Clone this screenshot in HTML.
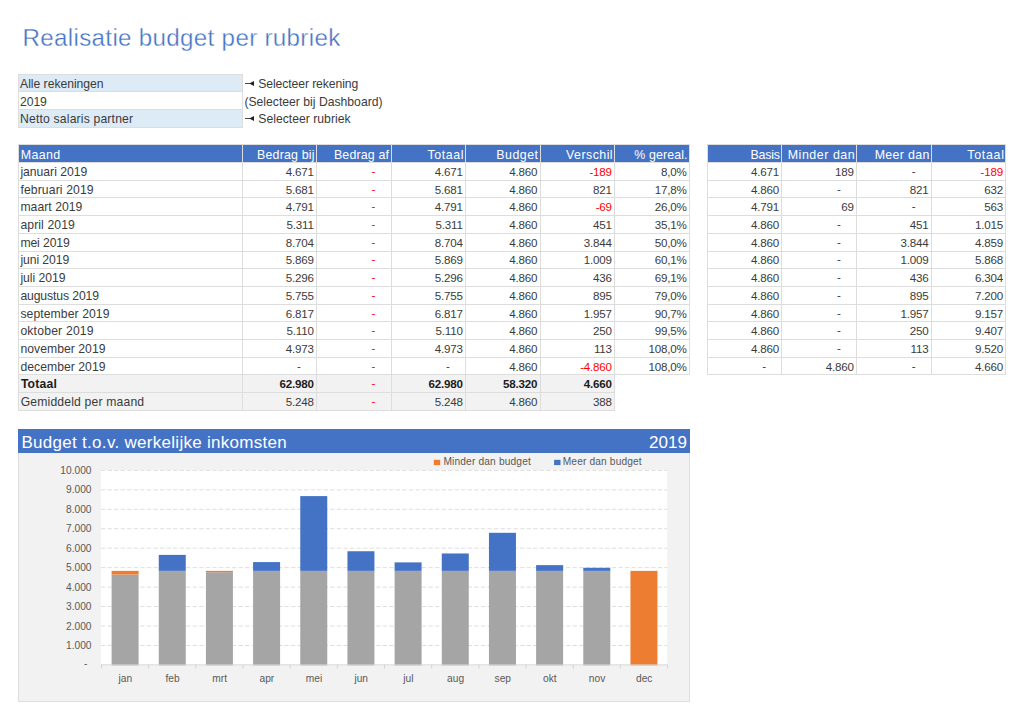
<!DOCTYPE html>
<html><head><meta charset="utf-8"><title>Realisatie budget per rubriek</title>
<style>
html,body{margin:0;padding:0;background:#fff;}
body{width:1024px;height:720px;position:relative;overflow:hidden;font-family:"Liberation Sans",sans-serif;color:#3b3b3b;font-size:12px;}
.a{position:absolute;white-space:nowrap;box-sizing:border-box;}
.c{position:absolute;white-space:pre;}
.ln{position:absolute;background:#DDDDDD;}
</style></head><body>

<div class="c" style="left:22.6px;top:24.3px;font-size:24.2px;letter-spacing:0.3px;color:#4472C4;-webkit-text-stroke:0.35px #fff;">Realisatie budget per rubriek</div>
<div class="a" style="left:18px;top:74.14px;width:224px;height:17.69px;background:#DDEBF7;"></div>
<div class="c" style="top:77px;line-height:14px;font-size:12.2px;letter-spacing:-0.035px;left:20.09px;">Alle rekeningen</div>
<div class="a" style="left:18px;top:91.83px;width:224px;height:17.69px;background:#FFFFFF;"></div>
<div class="c" style="top:95px;line-height:14px;font-size:12.2px;letter-spacing:-0.118px;left:20.09px;">2019</div>
<div class="a" style="left:18px;top:109.52px;width:224px;height:17.69px;background:#DDEBF7;"></div>
<div class="c" style="top:112px;line-height:14px;font-size:12.2px;letter-spacing:0.163px;left:20.09px;">Netto salaris partner</div>
<div class="ln" style="left:18px;top:73.64px;width:224.5px;height:1px;"></div>
<div class="ln" style="left:18px;top:91.33px;width:224.5px;height:1px;"></div>
<div class="ln" style="left:18px;top:109.02px;width:224.5px;height:1px;"></div>
<div class="ln" style="left:18px;top:126.71px;width:224.5px;height:1px;"></div>
<div class="ln" style="left:17.5px;top:73.64px;width:1px;height:53.07px;"></div>
<div class="ln" style="left:241.5px;top:73.64px;width:1px;height:53.07px;"></div>
<svg class="a" style="left:245px;top:80.00px" width="10" height="7" viewBox="0 0 10 7"><path d="M0 3.5H5" stroke="#333" stroke-width="0.9" fill="none"/><path d="M4.2 3.5L9 1V6Z" fill="#222"/></svg>
<div class="c" style="top:77px;line-height:14px;font-size:12.2px;letter-spacing:-0.100px;left:258.29px;">Selecteer rekening</div>
<div class="c" style="top:95px;line-height:14px;font-size:12.2px;left:244.39px;">(Selecteer bij Dashboard)</div>
<svg class="a" style="left:245px;top:115.30px" width="10" height="7" viewBox="0 0 10 7"><path d="M0 3.5H5" stroke="#333" stroke-width="0.9" fill="none"/><path d="M4.2 3.5L9 1V6Z" fill="#222"/></svg>
<div class="c" style="top:112px;line-height:14px;font-size:12.2px;letter-spacing:0.011px;left:258.29px;">Selecteer rubriek</div>
<div class="a" style="left:18px;top:145.30px;width:671.5px;height:17.29px;background:#4472C4;"></div>
<div class="a" style="left:707.2px;top:145.30px;width:298.50px;height:17.29px;background:#4472C4;"></div>
<div class="a" style="left:18px;top:374.87px;width:596.6px;height:35.38px;background:#F2F2F2;"></div>
<div class="c" style="top:148px;line-height:14px;font-size:12.4px;letter-spacing:0.387px;color:#fff;left:20.68px;">Maand</div>
<div class="c" style="top:148px;line-height:14px;font-size:12.4px;letter-spacing:0.183px;color:#fff;right:709.30px;">Bedrag bij</div>
<div class="c" style="top:148px;line-height:14px;font-size:12.4px;letter-spacing:0.176px;color:#fff;right:634.80px;">Bedrag af</div>
<div class="c" style="top:148px;line-height:14px;font-size:12.4px;letter-spacing:0.592px;color:#fff;right:559.89px;">Totaal</div>
<div class="c" style="top:148px;line-height:14px;font-size:12.4px;letter-spacing:0.492px;color:#fff;right:485.49px;">Budget</div>
<div class="c" style="top:148px;line-height:14px;font-size:12.4px;letter-spacing:0.450px;color:#fff;right:410.93px;">Verschil</div>
<div class="c" style="top:148px;line-height:14px;font-size:12.4px;letter-spacing:0.123px;color:#fff;right:336.36px;">% gereal.</div>
<div class="c" style="top:148px;line-height:14px;font-size:12.4px;letter-spacing:-0.218px;color:#fff;right:244.30px;">Basis</div>
<div class="c" style="top:148px;line-height:14px;font-size:12.4px;letter-spacing:0.560px;color:#fff;right:168.72px;">Minder dan</div>
<div class="c" style="top:148px;line-height:14px;font-size:12.4px;letter-spacing:0.340px;color:#fff;right:94.24px;">Meer dan</div>
<div class="c" style="top:148px;line-height:14px;font-size:12.4px;letter-spacing:0.712px;color:#fff;right:19.37px;">Totaal</div>
<div class="c" style="top:165px;line-height:14px;font-size:12.2px;letter-spacing:-0.016px;left:20.39px;">januari 2019</div>
<div class="c" style="top:166px;line-height:12px;font-size:11.6px;right:710.30px;letter-spacing:-0.2px;">4.671</div>
<div class="c" style="top:165px;line-height:12px;font-size:11.6px;right:648.90px;letter-spacing:-0.2px;color:#FF0000;">-</div>
<div class="c" style="top:166px;line-height:12px;font-size:11.6px;right:561.30px;letter-spacing:-0.2px;">4.671</div>
<div class="c" style="top:166px;line-height:12px;font-size:11.6px;right:486.80px;letter-spacing:-0.2px;">4.860</div>
<div class="c" style="top:166px;line-height:12px;font-size:11.6px;right:412.20px;letter-spacing:-0.2px;color:#FF0000;">-189</div>
<div class="c" style="top:166px;line-height:12px;font-size:11.6px;right:337.30px;letter-spacing:-0.2px;">8,0%</div>
<div class="c" style="top:166px;line-height:12px;font-size:11.6px;right:245.10px;letter-spacing:-0.2px;">4.671</div>
<div class="c" style="top:166px;line-height:12px;font-size:11.6px;right:170.30px;letter-spacing:-0.2px;">189</div>
<div class="c" style="top:165px;line-height:12px;font-size:11.6px;right:108.70px;letter-spacing:-0.2px;">-</div>
<div class="c" style="top:166px;line-height:12px;font-size:11.6px;right:21.10px;letter-spacing:-0.2px;color:#FF0000;">-189</div>
<div class="c" style="top:183px;line-height:14px;font-size:12.2px;letter-spacing:0.116px;left:20.39px;">februari 2019</div>
<div class="c" style="top:184px;line-height:12px;font-size:11.6px;right:710.30px;letter-spacing:-0.2px;">5.681</div>
<div class="c" style="top:183px;line-height:12px;font-size:11.6px;right:648.90px;letter-spacing:-0.2px;color:#FF0000;">-</div>
<div class="c" style="top:184px;line-height:12px;font-size:11.6px;right:561.30px;letter-spacing:-0.2px;">5.681</div>
<div class="c" style="top:184px;line-height:12px;font-size:11.6px;right:486.80px;letter-spacing:-0.2px;">4.860</div>
<div class="c" style="top:184px;line-height:12px;font-size:11.6px;right:412.20px;letter-spacing:-0.2px;">821</div>
<div class="c" style="top:184px;line-height:12px;font-size:11.6px;right:337.30px;letter-spacing:-0.2px;">17,8%</div>
<div class="c" style="top:184px;line-height:12px;font-size:11.6px;right:245.10px;letter-spacing:-0.2px;">4.860</div>
<div class="c" style="top:183px;line-height:12px;font-size:11.6px;right:183.40px;letter-spacing:-0.2px;">-</div>
<div class="c" style="top:184px;line-height:12px;font-size:11.6px;right:95.60px;letter-spacing:-0.2px;">821</div>
<div class="c" style="top:184px;line-height:12px;font-size:11.6px;right:21.10px;letter-spacing:-0.2px;">632</div>
<div class="c" style="top:200px;line-height:14px;font-size:12.2px;letter-spacing:0.040px;left:20.39px;">maart 2019</div>
<div class="c" style="top:201px;line-height:12px;font-size:11.6px;right:710.30px;letter-spacing:-0.2px;">4.791</div>
<div class="c" style="top:200px;line-height:12px;font-size:11.6px;right:648.90px;letter-spacing:-0.2px;color:#FF0000;">-</div>
<div class="c" style="top:201px;line-height:12px;font-size:11.6px;right:561.30px;letter-spacing:-0.2px;">4.791</div>
<div class="c" style="top:201px;line-height:12px;font-size:11.6px;right:486.80px;letter-spacing:-0.2px;">4.860</div>
<div class="c" style="top:201px;line-height:12px;font-size:11.6px;right:412.20px;letter-spacing:-0.2px;color:#FF0000;">-69</div>
<div class="c" style="top:201px;line-height:12px;font-size:11.6px;right:337.30px;letter-spacing:-0.2px;">26,0%</div>
<div class="c" style="top:201px;line-height:12px;font-size:11.6px;right:245.10px;letter-spacing:-0.2px;">4.791</div>
<div class="c" style="top:201px;line-height:12px;font-size:11.6px;right:170.30px;letter-spacing:-0.2px;">69</div>
<div class="c" style="top:200px;line-height:12px;font-size:11.6px;right:108.70px;letter-spacing:-0.2px;">-</div>
<div class="c" style="top:201px;line-height:12px;font-size:11.6px;right:21.10px;letter-spacing:-0.2px;">563</div>
<div class="c" style="top:218px;line-height:14px;font-size:12.2px;letter-spacing:0.099px;left:20.39px;">april 2019</div>
<div class="c" style="top:219px;line-height:12px;font-size:11.6px;right:710.30px;letter-spacing:-0.2px;">5.311</div>
<div class="c" style="top:218px;line-height:12px;font-size:11.6px;right:648.90px;letter-spacing:-0.2px;color:#FF0000;">-</div>
<div class="c" style="top:219px;line-height:12px;font-size:11.6px;right:561.30px;letter-spacing:-0.2px;">5.311</div>
<div class="c" style="top:219px;line-height:12px;font-size:11.6px;right:486.80px;letter-spacing:-0.2px;">4.860</div>
<div class="c" style="top:219px;line-height:12px;font-size:11.6px;right:412.20px;letter-spacing:-0.2px;">451</div>
<div class="c" style="top:219px;line-height:12px;font-size:11.6px;right:337.30px;letter-spacing:-0.2px;">35,1%</div>
<div class="c" style="top:219px;line-height:12px;font-size:11.6px;right:245.10px;letter-spacing:-0.2px;">4.860</div>
<div class="c" style="top:218px;line-height:12px;font-size:11.6px;right:183.40px;letter-spacing:-0.2px;">-</div>
<div class="c" style="top:219px;line-height:12px;font-size:11.6px;right:95.60px;letter-spacing:-0.2px;">451</div>
<div class="c" style="top:219px;line-height:12px;font-size:11.6px;right:21.10px;letter-spacing:-0.2px;">1.015</div>
<div class="c" style="top:236px;line-height:14px;font-size:12.2px;letter-spacing:-0.103px;left:20.39px;">mei 2019</div>
<div class="c" style="top:237px;line-height:12px;font-size:11.6px;right:710.30px;letter-spacing:-0.2px;">8.704</div>
<div class="c" style="top:236px;line-height:12px;font-size:11.6px;right:648.90px;letter-spacing:-0.2px;color:#FF0000;">-</div>
<div class="c" style="top:237px;line-height:12px;font-size:11.6px;right:561.30px;letter-spacing:-0.2px;">8.704</div>
<div class="c" style="top:237px;line-height:12px;font-size:11.6px;right:486.80px;letter-spacing:-0.2px;">4.860</div>
<div class="c" style="top:237px;line-height:12px;font-size:11.6px;right:412.20px;letter-spacing:-0.2px;">3.844</div>
<div class="c" style="top:237px;line-height:12px;font-size:11.6px;right:337.30px;letter-spacing:-0.2px;">50,0%</div>
<div class="c" style="top:237px;line-height:12px;font-size:11.6px;right:245.10px;letter-spacing:-0.2px;">4.860</div>
<div class="c" style="top:236px;line-height:12px;font-size:11.6px;right:183.40px;letter-spacing:-0.2px;">-</div>
<div class="c" style="top:237px;line-height:12px;font-size:11.6px;right:95.60px;letter-spacing:-0.2px;">3.844</div>
<div class="c" style="top:237px;line-height:12px;font-size:11.6px;right:21.10px;letter-spacing:-0.2px;">4.859</div>
<div class="c" style="top:253px;line-height:14px;font-size:12.2px;letter-spacing:-0.083px;left:20.39px;">juni 2019</div>
<div class="c" style="top:254px;line-height:12px;font-size:11.6px;right:710.30px;letter-spacing:-0.2px;">5.869</div>
<div class="c" style="top:253px;line-height:12px;font-size:11.6px;right:648.90px;letter-spacing:-0.2px;color:#FF0000;">-</div>
<div class="c" style="top:254px;line-height:12px;font-size:11.6px;right:561.30px;letter-spacing:-0.2px;">5.869</div>
<div class="c" style="top:254px;line-height:12px;font-size:11.6px;right:486.80px;letter-spacing:-0.2px;">4.860</div>
<div class="c" style="top:254px;line-height:12px;font-size:11.6px;right:412.20px;letter-spacing:-0.2px;">1.009</div>
<div class="c" style="top:254px;line-height:12px;font-size:11.6px;right:337.30px;letter-spacing:-0.2px;">60,1%</div>
<div class="c" style="top:254px;line-height:12px;font-size:11.6px;right:245.10px;letter-spacing:-0.2px;">4.860</div>
<div class="c" style="top:253px;line-height:12px;font-size:11.6px;right:183.40px;letter-spacing:-0.2px;">-</div>
<div class="c" style="top:254px;line-height:12px;font-size:11.6px;right:95.60px;letter-spacing:-0.2px;">1.009</div>
<div class="c" style="top:254px;line-height:12px;font-size:11.6px;right:21.10px;letter-spacing:-0.2px;">5.868</div>
<div class="c" style="top:271px;line-height:14px;font-size:12.2px;letter-spacing:-0.023px;left:20.39px;">juli 2019</div>
<div class="c" style="top:272px;line-height:12px;font-size:11.6px;right:710.30px;letter-spacing:-0.2px;">5.296</div>
<div class="c" style="top:271px;line-height:12px;font-size:11.6px;right:648.90px;letter-spacing:-0.2px;color:#FF0000;">-</div>
<div class="c" style="top:272px;line-height:12px;font-size:11.6px;right:561.30px;letter-spacing:-0.2px;">5.296</div>
<div class="c" style="top:272px;line-height:12px;font-size:11.6px;right:486.80px;letter-spacing:-0.2px;">4.860</div>
<div class="c" style="top:272px;line-height:12px;font-size:11.6px;right:412.20px;letter-spacing:-0.2px;">436</div>
<div class="c" style="top:272px;line-height:12px;font-size:11.6px;right:337.30px;letter-spacing:-0.2px;">69,1%</div>
<div class="c" style="top:272px;line-height:12px;font-size:11.6px;right:245.10px;letter-spacing:-0.2px;">4.860</div>
<div class="c" style="top:271px;line-height:12px;font-size:11.6px;right:183.40px;letter-spacing:-0.2px;">-</div>
<div class="c" style="top:272px;line-height:12px;font-size:11.6px;right:95.60px;letter-spacing:-0.2px;">436</div>
<div class="c" style="top:272px;line-height:12px;font-size:11.6px;right:21.10px;letter-spacing:-0.2px;">6.304</div>
<div class="c" style="top:289px;line-height:14px;font-size:12.2px;letter-spacing:-0.112px;left:20.39px;">augustus 2019</div>
<div class="c" style="top:290px;line-height:12px;font-size:11.6px;right:710.30px;letter-spacing:-0.2px;">5.755</div>
<div class="c" style="top:289px;line-height:12px;font-size:11.6px;right:648.90px;letter-spacing:-0.2px;color:#FF0000;">-</div>
<div class="c" style="top:290px;line-height:12px;font-size:11.6px;right:561.30px;letter-spacing:-0.2px;">5.755</div>
<div class="c" style="top:290px;line-height:12px;font-size:11.6px;right:486.80px;letter-spacing:-0.2px;">4.860</div>
<div class="c" style="top:290px;line-height:12px;font-size:11.6px;right:412.20px;letter-spacing:-0.2px;">895</div>
<div class="c" style="top:290px;line-height:12px;font-size:11.6px;right:337.30px;letter-spacing:-0.2px;">79,0%</div>
<div class="c" style="top:290px;line-height:12px;font-size:11.6px;right:245.10px;letter-spacing:-0.2px;">4.860</div>
<div class="c" style="top:289px;line-height:12px;font-size:11.6px;right:183.40px;letter-spacing:-0.2px;">-</div>
<div class="c" style="top:290px;line-height:12px;font-size:11.6px;right:95.60px;letter-spacing:-0.2px;">895</div>
<div class="c" style="top:290px;line-height:12px;font-size:11.6px;right:21.10px;letter-spacing:-0.2px;">7.200</div>
<div class="c" style="top:307px;line-height:14px;font-size:12.2px;letter-spacing:0.079px;left:20.39px;">september 2019</div>
<div class="c" style="top:308px;line-height:12px;font-size:11.6px;right:710.30px;letter-spacing:-0.2px;">6.817</div>
<div class="c" style="top:307px;line-height:12px;font-size:11.6px;right:648.90px;letter-spacing:-0.2px;color:#FF0000;">-</div>
<div class="c" style="top:308px;line-height:12px;font-size:11.6px;right:561.30px;letter-spacing:-0.2px;">6.817</div>
<div class="c" style="top:308px;line-height:12px;font-size:11.6px;right:486.80px;letter-spacing:-0.2px;">4.860</div>
<div class="c" style="top:308px;line-height:12px;font-size:11.6px;right:412.20px;letter-spacing:-0.2px;">1.957</div>
<div class="c" style="top:308px;line-height:12px;font-size:11.6px;right:337.30px;letter-spacing:-0.2px;">90,7%</div>
<div class="c" style="top:308px;line-height:12px;font-size:11.6px;right:245.10px;letter-spacing:-0.2px;">4.860</div>
<div class="c" style="top:307px;line-height:12px;font-size:11.6px;right:183.40px;letter-spacing:-0.2px;">-</div>
<div class="c" style="top:308px;line-height:12px;font-size:11.6px;right:95.60px;letter-spacing:-0.2px;">1.957</div>
<div class="c" style="top:308px;line-height:12px;font-size:11.6px;right:21.10px;letter-spacing:-0.2px;">9.157</div>
<div class="c" style="top:324px;line-height:14px;font-size:12.2px;letter-spacing:0.188px;left:20.39px;">oktober 2019</div>
<div class="c" style="top:325px;line-height:12px;font-size:11.6px;right:710.30px;letter-spacing:-0.2px;">5.110</div>
<div class="c" style="top:324px;line-height:12px;font-size:11.6px;right:648.90px;letter-spacing:-0.2px;color:#FF0000;">-</div>
<div class="c" style="top:325px;line-height:12px;font-size:11.6px;right:561.30px;letter-spacing:-0.2px;">5.110</div>
<div class="c" style="top:325px;line-height:12px;font-size:11.6px;right:486.80px;letter-spacing:-0.2px;">4.860</div>
<div class="c" style="top:325px;line-height:12px;font-size:11.6px;right:412.20px;letter-spacing:-0.2px;">250</div>
<div class="c" style="top:325px;line-height:12px;font-size:11.6px;right:337.30px;letter-spacing:-0.2px;">99,5%</div>
<div class="c" style="top:325px;line-height:12px;font-size:11.6px;right:245.10px;letter-spacing:-0.2px;">4.860</div>
<div class="c" style="top:324px;line-height:12px;font-size:11.6px;right:183.40px;letter-spacing:-0.2px;">-</div>
<div class="c" style="top:325px;line-height:12px;font-size:11.6px;right:95.60px;letter-spacing:-0.2px;">250</div>
<div class="c" style="top:325px;line-height:12px;font-size:11.6px;right:21.10px;letter-spacing:-0.2px;">9.407</div>
<div class="c" style="top:342px;line-height:14px;font-size:12.2px;letter-spacing:0.035px;left:20.39px;">november 2019</div>
<div class="c" style="top:343px;line-height:12px;font-size:11.6px;right:710.30px;letter-spacing:-0.2px;">4.973</div>
<div class="c" style="top:342px;line-height:12px;font-size:11.6px;right:648.90px;letter-spacing:-0.2px;color:#FF0000;">-</div>
<div class="c" style="top:343px;line-height:12px;font-size:11.6px;right:561.30px;letter-spacing:-0.2px;">4.973</div>
<div class="c" style="top:343px;line-height:12px;font-size:11.6px;right:486.80px;letter-spacing:-0.2px;">4.860</div>
<div class="c" style="top:343px;line-height:12px;font-size:11.6px;right:412.20px;letter-spacing:-0.2px;">113</div>
<div class="c" style="top:343px;line-height:12px;font-size:11.6px;right:337.30px;letter-spacing:-0.2px;">108,0%</div>
<div class="c" style="top:343px;line-height:12px;font-size:11.6px;right:245.10px;letter-spacing:-0.2px;">4.860</div>
<div class="c" style="top:342px;line-height:12px;font-size:11.6px;right:183.40px;letter-spacing:-0.2px;">-</div>
<div class="c" style="top:343px;line-height:12px;font-size:11.6px;right:95.60px;letter-spacing:-0.2px;">113</div>
<div class="c" style="top:343px;line-height:12px;font-size:11.6px;right:21.10px;letter-spacing:-0.2px;">9.520</div>
<div class="c" style="top:360px;line-height:14px;font-size:12.2px;letter-spacing:0.035px;left:20.39px;">december 2019</div>
<div class="c" style="top:360px;line-height:12px;font-size:11.6px;right:723.40px;letter-spacing:-0.2px;">-</div>
<div class="c" style="top:360px;line-height:12px;font-size:11.6px;right:648.90px;letter-spacing:-0.2px;color:#FF0000;">-</div>
<div class="c" style="top:360px;line-height:12px;font-size:11.6px;right:574.40px;letter-spacing:-0.2px;">-</div>
<div class="c" style="top:361px;line-height:12px;font-size:11.6px;right:486.80px;letter-spacing:-0.2px;">4.860</div>
<div class="c" style="top:361px;line-height:12px;font-size:11.6px;right:412.20px;letter-spacing:-0.2px;color:#FF0000;">-4.860</div>
<div class="c" style="top:361px;line-height:12px;font-size:11.6px;right:337.30px;letter-spacing:-0.2px;">108,0%</div>
<div class="c" style="top:360px;line-height:12px;font-size:11.6px;right:258.20px;letter-spacing:-0.2px;">-</div>
<div class="c" style="top:361px;line-height:12px;font-size:11.6px;right:170.30px;letter-spacing:-0.2px;">4.860</div>
<div class="c" style="top:360px;line-height:12px;font-size:11.6px;right:108.70px;letter-spacing:-0.2px;">-</div>
<div class="c" style="top:361px;line-height:12px;font-size:11.6px;right:21.10px;letter-spacing:-0.2px;">4.660</div>
<div class="c" style="top:377px;line-height:14px;font-size:12.2px;letter-spacing:0.184px;font-weight:700;color:#1c1c1c;left:20.89px;">Totaal</div>
<div class="c" style="top:378px;line-height:12px;font-size:11.6px;right:710.30px;letter-spacing:-0.2px;font-weight:bold;color:#1c1c1c;">62.980</div>
<div class="c" style="top:377px;line-height:12px;font-size:11.6px;right:648.90px;letter-spacing:-0.2px;color:#FF0000;">-</div>
<div class="c" style="top:378px;line-height:12px;font-size:11.6px;right:561.30px;letter-spacing:-0.2px;font-weight:bold;color:#1c1c1c;">62.980</div>
<div class="c" style="top:378px;line-height:12px;font-size:11.6px;right:486.80px;letter-spacing:-0.2px;font-weight:bold;color:#1c1c1c;">58.320</div>
<div class="c" style="top:378px;line-height:12px;font-size:11.6px;right:412.20px;letter-spacing:-0.2px;font-weight:bold;color:#1c1c1c;">4.660</div>
<div class="c" style="top:395px;line-height:14px;font-size:12.2px;letter-spacing:0.157px;left:20.69px;">Gemiddeld per maand</div>
<div class="c" style="top:396px;line-height:12px;font-size:11.6px;right:710.30px;letter-spacing:-0.2px;">5.248</div>
<div class="c" style="top:395px;line-height:12px;font-size:11.6px;right:648.90px;letter-spacing:-0.2px;color:#FF0000;">-</div>
<div class="c" style="top:396px;line-height:12px;font-size:11.6px;right:561.30px;letter-spacing:-0.2px;">5.248</div>
<div class="c" style="top:396px;line-height:12px;font-size:11.6px;right:486.80px;letter-spacing:-0.2px;">4.860</div>
<div class="c" style="top:396px;line-height:12px;font-size:11.6px;right:412.20px;letter-spacing:-0.2px;">388</div>
<div class="ln" style="left:18px;top:144.40px;width:671.5px;height:1px;"></div>
<div class="ln" style="left:707.2px;top:144.40px;width:298.50px;height:1px;"></div>
<div class="ln" style="left:18px;top:162.09px;width:671.5px;height:1px;"></div>
<div class="ln" style="left:707.2px;top:162.09px;width:298.50px;height:1px;"></div>
<div class="ln" style="left:18px;top:179.78px;width:671.5px;height:1px;"></div>
<div class="ln" style="left:707.2px;top:179.78px;width:298.50px;height:1px;"></div>
<div class="ln" style="left:18px;top:197.47px;width:671.5px;height:1px;"></div>
<div class="ln" style="left:707.2px;top:197.47px;width:298.50px;height:1px;"></div>
<div class="ln" style="left:18px;top:215.16px;width:671.5px;height:1px;"></div>
<div class="ln" style="left:707.2px;top:215.16px;width:298.50px;height:1px;"></div>
<div class="ln" style="left:18px;top:232.85px;width:671.5px;height:1px;"></div>
<div class="ln" style="left:707.2px;top:232.85px;width:298.50px;height:1px;"></div>
<div class="ln" style="left:18px;top:250.54px;width:671.5px;height:1px;"></div>
<div class="ln" style="left:707.2px;top:250.54px;width:298.50px;height:1px;"></div>
<div class="ln" style="left:18px;top:268.23px;width:671.5px;height:1px;"></div>
<div class="ln" style="left:707.2px;top:268.23px;width:298.50px;height:1px;"></div>
<div class="ln" style="left:18px;top:285.92px;width:671.5px;height:1px;"></div>
<div class="ln" style="left:707.2px;top:285.92px;width:298.50px;height:1px;"></div>
<div class="ln" style="left:18px;top:303.61px;width:671.5px;height:1px;"></div>
<div class="ln" style="left:707.2px;top:303.61px;width:298.50px;height:1px;"></div>
<div class="ln" style="left:18px;top:321.30px;width:671.5px;height:1px;"></div>
<div class="ln" style="left:707.2px;top:321.30px;width:298.50px;height:1px;"></div>
<div class="ln" style="left:18px;top:338.99px;width:671.5px;height:1px;"></div>
<div class="ln" style="left:707.2px;top:338.99px;width:298.50px;height:1px;"></div>
<div class="ln" style="left:18px;top:356.68px;width:671.5px;height:1px;"></div>
<div class="ln" style="left:707.2px;top:356.68px;width:298.50px;height:1px;"></div>
<div class="ln" style="left:18px;top:374.37px;width:671.5px;height:1px;"></div>
<div class="ln" style="left:707.2px;top:374.37px;width:298.50px;height:1px;"></div>
<div class="ln" style="left:18px;top:392.06px;width:596.6px;height:1px;"></div>
<div class="ln" style="left:18px;top:409.75px;width:596.6px;height:1px;"></div>
<div class="ln" style="left:17.50px;top:144.40px;width:1px;height:266.35px;"></div>
<div class="ln" style="left:241.50px;top:144.40px;width:1px;height:266.35px;"></div>
<div class="ln" style="left:316.00px;top:144.40px;width:1px;height:266.35px;"></div>
<div class="ln" style="left:390.50px;top:144.40px;width:1px;height:266.35px;"></div>
<div class="ln" style="left:465.00px;top:144.40px;width:1px;height:266.35px;"></div>
<div class="ln" style="left:539.50px;top:144.40px;width:1px;height:266.35px;"></div>
<div class="ln" style="left:614.10px;top:144.40px;width:1px;height:266.35px;"></div>
<div class="ln" style="left:689.00px;top:144.40px;width:1px;height:230.97px;"></div>
<div class="ln" style="left:706.70px;top:144.40px;width:1px;height:230.97px;"></div>
<div class="ln" style="left:781.20px;top:144.40px;width:1px;height:230.97px;"></div>
<div class="ln" style="left:856.00px;top:144.40px;width:1px;height:230.97px;"></div>
<div class="ln" style="left:930.70px;top:144.40px;width:1px;height:230.97px;"></div>
<div class="ln" style="left:1005.20px;top:144.40px;width:1px;height:230.97px;"></div>
<div class="a" style="left:18px;top:452.8px;width:671.5px;height:249.5px;background:#F2F2F2;border:1px solid #DEDEDE;border-top:none;"></div>
<div class="a" style="left:18px;top:428.6px;width:671.5px;height:24.2px;background:#4472C4;"></div>
<div class="c" style="top:433px;line-height:19px;font-size:17px;letter-spacing:0.292px;color:#fff;left:21.45px;">Budget t.o.v. werkelijke inkomsten</div>
<div class="c" style="top:433px;line-height:19px;font-size:17px;letter-spacing:0.057px;color:#fff;right:336.99px;">2019</div>
<svg class="a" style="left:0;top:0" width="1024" height="720" viewBox="0 0 1024 720" font-family="Liberation Sans, sans-serif">
<rect x="101.0" y="469.9" width="566.2" height="195.5" fill="#fff"/>
<line x1="101.0" x2="667.2" y1="470.40" y2="470.40" stroke="#DEDEDE" stroke-width="1" stroke-dasharray="4.3 2.25"/>
<line x1="101.0" x2="667.2" y1="489.85" y2="489.85" stroke="#DEDEDE" stroke-width="1" stroke-dasharray="4.3 2.25"/>
<line x1="101.0" x2="667.2" y1="509.30" y2="509.30" stroke="#DEDEDE" stroke-width="1" stroke-dasharray="4.3 2.25"/>
<line x1="101.0" x2="667.2" y1="528.75" y2="528.75" stroke="#DEDEDE" stroke-width="1" stroke-dasharray="4.3 2.25"/>
<line x1="101.0" x2="667.2" y1="548.20" y2="548.20" stroke="#DEDEDE" stroke-width="1" stroke-dasharray="4.3 2.25"/>
<line x1="101.0" x2="667.2" y1="567.65" y2="567.65" stroke="#DEDEDE" stroke-width="1" stroke-dasharray="4.3 2.25"/>
<line x1="101.0" x2="667.2" y1="587.10" y2="587.10" stroke="#DEDEDE" stroke-width="1" stroke-dasharray="4.3 2.25"/>
<line x1="101.0" x2="667.2" y1="606.55" y2="606.55" stroke="#DEDEDE" stroke-width="1" stroke-dasharray="4.3 2.25"/>
<line x1="101.0" x2="667.2" y1="626.00" y2="626.00" stroke="#DEDEDE" stroke-width="1" stroke-dasharray="4.3 2.25"/>
<line x1="101.0" x2="667.2" y1="645.45" y2="645.45" stroke="#DEDEDE" stroke-width="1" stroke-dasharray="4.3 2.25"/>
<rect x="111.59" y="574.55" width="27" height="90.85" fill="#A5A5A5"/>
<rect x="111.59" y="570.87" width="27" height="3.68" fill="#ED7D31"/>
<rect x="158.76" y="570.87" width="27" height="94.53" fill="#A5A5A5"/>
<rect x="158.76" y="554.90" width="27" height="15.97" fill="#4472C4"/>
<rect x="205.93" y="572.22" width="27" height="93.18" fill="#A5A5A5"/>
<rect x="205.93" y="570.87" width="27" height="1.34" fill="#ED7D31"/>
<rect x="253.09" y="570.87" width="27" height="94.53" fill="#A5A5A5"/>
<rect x="253.09" y="562.10" width="27" height="8.77" fill="#4472C4"/>
<rect x="300.26" y="570.87" width="27" height="94.53" fill="#A5A5A5"/>
<rect x="300.26" y="496.11" width="27" height="74.77" fill="#4472C4"/>
<rect x="347.44" y="570.87" width="27" height="94.53" fill="#A5A5A5"/>
<rect x="347.44" y="551.25" width="27" height="19.63" fill="#4472C4"/>
<rect x="394.60" y="570.87" width="27" height="94.53" fill="#A5A5A5"/>
<rect x="394.60" y="562.39" width="27" height="8.48" fill="#4472C4"/>
<rect x="441.77" y="570.87" width="27" height="94.53" fill="#A5A5A5"/>
<rect x="441.77" y="553.47" width="27" height="17.41" fill="#4472C4"/>
<rect x="488.94" y="570.87" width="27" height="94.53" fill="#A5A5A5"/>
<rect x="488.94" y="532.81" width="27" height="38.06" fill="#4472C4"/>
<rect x="536.12" y="570.87" width="27" height="94.53" fill="#A5A5A5"/>
<rect x="536.12" y="565.14" width="27" height="5.74" fill="#4472C4"/>
<rect x="583.29" y="570.87" width="27" height="94.53" fill="#A5A5A5"/>
<rect x="583.29" y="567.80" width="27" height="3.07" fill="#4472C4"/>
<rect x="630.46" y="570.87" width="27" height="94.53" fill="#ED7D31"/>
<line x1="101.0" x2="667.2" y1="664.9" y2="664.9" stroke="#D4D4D4" stroke-width="1"/>
<line x1="101.50" x2="101.50" y1="664.4" y2="668.6" stroke="#D4D4D4" stroke-width="1"/>
<line x1="148.67" x2="148.67" y1="664.4" y2="668.6" stroke="#D4D4D4" stroke-width="1"/>
<line x1="195.84" x2="195.84" y1="664.4" y2="668.6" stroke="#D4D4D4" stroke-width="1"/>
<line x1="243.01" x2="243.01" y1="664.4" y2="668.6" stroke="#D4D4D4" stroke-width="1"/>
<line x1="290.18" x2="290.18" y1="664.4" y2="668.6" stroke="#D4D4D4" stroke-width="1"/>
<line x1="337.35" x2="337.35" y1="664.4" y2="668.6" stroke="#D4D4D4" stroke-width="1"/>
<line x1="384.52" x2="384.52" y1="664.4" y2="668.6" stroke="#D4D4D4" stroke-width="1"/>
<line x1="431.69" x2="431.69" y1="664.4" y2="668.6" stroke="#D4D4D4" stroke-width="1"/>
<line x1="478.86" x2="478.86" y1="664.4" y2="668.6" stroke="#D4D4D4" stroke-width="1"/>
<line x1="526.03" x2="526.03" y1="664.4" y2="668.6" stroke="#D4D4D4" stroke-width="1"/>
<line x1="573.20" x2="573.20" y1="664.4" y2="668.6" stroke="#D4D4D4" stroke-width="1"/>
<line x1="620.37" x2="620.37" y1="664.4" y2="668.6" stroke="#D4D4D4" stroke-width="1"/>
<line x1="667.54" x2="667.54" y1="664.4" y2="668.6" stroke="#D4D4D4" stroke-width="1"/>
<g font-size="10.2" fill="#595959">
<text x="91.5" y="474.00" text-anchor="end">10.000</text>
<text x="91.5" y="493.45" text-anchor="end">9.000</text>
<text x="91.5" y="512.90" text-anchor="end">8.000</text>
<text x="91.5" y="532.35" text-anchor="end">7.000</text>
<text x="91.5" y="551.80" text-anchor="end">6.000</text>
<text x="91.5" y="571.25" text-anchor="end">5.000</text>
<text x="91.5" y="590.70" text-anchor="end">4.000</text>
<text x="91.5" y="610.15" text-anchor="end">3.000</text>
<text x="91.5" y="629.60" text-anchor="end">2.000</text>
<text x="91.5" y="649.05" text-anchor="end">1.000</text>
<text x="87.5" y="667.20" text-anchor="end">-</text>
<text x="125.39" y="682" text-anchor="middle">jan</text>
<text x="172.56" y="682" text-anchor="middle">feb</text>
<text x="219.73" y="682" text-anchor="middle">mrt</text>
<text x="266.90" y="682" text-anchor="middle">apr</text>
<text x="314.06" y="682" text-anchor="middle">mei</text>
<text x="361.24" y="682" text-anchor="middle">jun</text>
<text x="408.41" y="682" text-anchor="middle">jul</text>
<text x="455.58" y="682" text-anchor="middle">aug</text>
<text x="502.75" y="682" text-anchor="middle">sep</text>
<text x="549.91" y="682" text-anchor="middle">okt</text>
<text x="597.09" y="682" text-anchor="middle">nov</text>
<text x="644.25" y="682" text-anchor="middle">dec</text>
<rect x="433.8" y="459.8" width="6.4" height="5.3" fill="#ED7D31"/>
<text x="443.4" y="465.3" textLength="87.4" lengthAdjust="spacing">Minder dan budget</text>
<rect x="554.1" y="459.8" width="6.4" height="5.3" fill="#4472C4"/>
<text x="562.7" y="465.3" textLength="79" lengthAdjust="spacing">Meer dan budget</text>
</g></svg>
</body></html>
